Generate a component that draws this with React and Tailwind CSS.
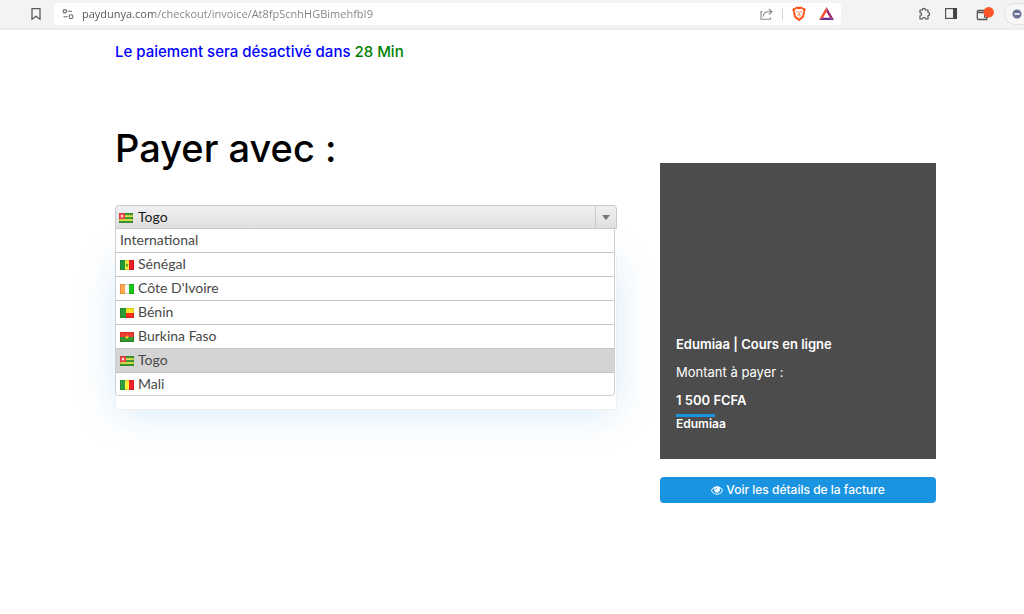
// Checkout.jsx
import React, { useState } from "react";

const countries = [
  { name: "International" },
  { name: "Sénégal", code: "sn" },
  { name: "Côte D'Ivoire", code: "ci" },
  { name: "Bénin", code: "bj" },
  { name: "Burkina Faso", code: "bf" },
  { name: "Togo", code: "tg" },
  { name: "Mali", code: "ml" },
];

function Flag({ code }) {
  return (
    <svg viewBox="0 0 14 9" preserveAspectRatio="none" className="w-[14px] h-[10px] shrink-0" aria-hidden="true">
      {code === "sn" && (
        <>
          <rect width="5" height="9" fill="#1f9a3a" />
          <rect x="5" width="4" height="9" fill="#f4ec3c" />
          <rect x="9" width="5" height="9" fill="#f01c24" />
          <path d="M7 2.8l.6 1.3h1.2l-1 .9.4 1.4L7 5.6l-1.2.8.4-1.4-1-.9h1.2z" fill="#4a9c2a" />
        </>
      )}
      {code === "ci" && (
        <>
          <rect width="5" height="9" fill="#ffa64c" />
          <rect x="5" width="4" height="9" fill="#f7f7f7" />
          <rect x="9" width="5" height="9" fill="#17c517" />
        </>
      )}
      {code === "bj" && (
        <>
          <rect width="14" height="9" fill="#fb2a1d" />
          <rect width="14" height="4.5" fill="#f5e425" />
          <rect width="6" height="9" fill="#2b9b34" />
        </>
      )}
      {code === "bf" && (
        <>
          <rect width="14" height="9" fill="#35962f" />
          <rect width="14" height="4.5" fill="#f03a35" />
          <path d="M7 2.6l.6 1.4h1.5L7.9 5l.4 1.4L7 5.6l-1.3.8L6.1 5 4.9 4h1.500z" fill="#f2cf2a" />
        </>
      )}
      {code === "tg" && (
        <>
          <rect width="14" height="9" fill="#3f9a35" />
          <rect y="2" width="14" height="1.6" fill="#dfe04a" />
          <rect y="5.5" width="14" height="1.6" fill="#dfe04a" />
          <rect width="6" height="5.5" fill="#f2474a" />
          <circle cx="3" cy="2.8" r="1.2" fill="#ffe3e3" />
        </>
      )}
      {code === "ml" && (
        <>
          <rect width="5" height="9" fill="#2ea043" />
          <rect x="5" width="4" height="9" fill="#fbf03a" />
          <rect x="9" width="5" height="9" fill="#f8202a" />
        </>
      )}
      <rect x="0.5" y="0.5" width="13" height="8" fill="none" stroke="#000" strokeOpacity="0.12" />
    </svg>
  );
}

function BrowserBar() {
  return (
    <header className="flex items-center h-[30px] pb-px bg-[#f3f3f3] border-b-2 border-[#ececec] overflow-hidden">
      <button aria-label="Bookmark" className="ml-[30px] w-3 mr-3">
        <svg viewBox="0 0 12 14" className="w-3 h-[14px]" fill="none" stroke="#5c5c5c" strokeWidth="1.3">
          <path d="M2 1.7h8v10.6L6 9.3 2 12.3z" />
        </svg>
      </button>

      <div className="flex flex-1 items-center h-[22px] bg-white rounded px-2">
        <svg viewBox="0 0 12 12" className="w-3 h-3 shrink-0" fill="none" stroke="#6a6a6a" strokeWidth="1.1">
          <circle cx="2.8" cy="3.3" r="1.7" />
          <path d="M5.8 3.300H10M1.500 8.700h4" />
          <circle cx="9" cy="8.7" r="1.9" />
        </svg>
        <input
          type="text"
          aria-label="Address"
          defaultValue="paydunya.com/checkout/invoice/At8fpScnhHGBimehfbI9"
          className="ml-2 flex-1 min-w-0 text-[11px] leading-4 outline-none text-transparent bg-clip-text bg-[linear-gradient(90deg,#505050_73px,#808080_73px)] font-['Open_Sans',sans-serif]"
        />
        <button aria-label="Share">
          <svg viewBox="0 0 13 12" className="w-[13px] h-3" fill="none" stroke="#8a8a8a" strokeWidth="1.1">
            <path d="M2.500 3.500H1v7.700h9.500V9.500" />
            <path d="M3.300 8.500c.3-3 2.300-4.700 5.200-4.700h3M9 1l3 2.800-3 2.700" />
          </svg>
        </button>
        <span className="w-px h-3 mx-[9px] bg-[#d6d6d6]" />
        <button aria-label="Shields">
          <svg viewBox="0 0 14 16" className="w-[14px] h-4">
            <path d="M4 .8h6l1.300 1.400 1.500-.1.900 2-.6 1.300-1.300 6.200L7 15.300l-4.800-3.700L.9 5.400.3 4.100l.9-2 1.500.1z" fill="#fb5418" />
            <path d="M7 3.300l3-.5 1.700 2.400-1.500 2.900.3 1.700L7 12.800 3.500 9.800l.3-1.700-1.500-2.900L4 2.800z" fill="#fff" />
            <path d="M3.800 5.200l1.900.7M10.200 5.200l-1.900.7M7 5.500v3.300M5.300 9.500L7 8.700l1.700.8M7 10.500v1" stroke="#fb5418" strokeWidth=".8" fill="none" />
          </svg>
        </button>
        <button aria-label="Rewards" className="ml-[13px] -mr-px">
          <svg viewBox="0 0 15 13" className="w-[15px] h-[13px]">
            <path d="M7.500 0L0 13l4-2.300 3.500-6z" fill="#ff4724" />
            <path d="M7.500 0L15 13l-4-2.300-3.500-6z" fill="#9e1f63" />
            <path d="M0 13h15l-4-2.300H4z" fill="#662d91" />
          </svg>
        </button>
      </div>

      <div className="flex items-center pl-[77px]">
        <button aria-label="Extensions">
          <svg viewBox="0 0 13 13" className="w-[13px] h-[13px]" fill="none" stroke="#555" strokeWidth="1.2" strokeLinejoin="round">
            <path d="M2 3h2.300a1.600 1.600 0 1 1 3.200 0H10v2.500a1.600 1.600 0 1 1 0 3.200V12H7.500a1.500 1.500 0 0 0-3 0H2V8.900a1.600 1.600 0 0 0 0-3.200z" />
          </svg>
        </button>
        <button aria-label="Sidebar" className="ml-[14px]">
          <svg viewBox="0 0 12 11" className="w-3 h-[11px]">
            <rect x=".6" y=".6" width="10.8" height="9.8" fill="none" stroke="#555" strokeWidth="1.2" />
            <rect x="8" y="0" width="4" height="11" fill="#444" />
          </svg>
        </button>
        <button aria-label="Wallet" className="ml-[19px]">
          <svg viewBox="0 0 18 14" className="w-[18px] h-[14px]">
            <path d="M10 3.500H2.500a1.200 1.200 0 0 0-1.200 1V11.300a1.200 1.200 0 0 0 1.200 1.200h8.200V5.500H2" fill="none" stroke="#555" strokeWidth="1.3" />
            <path d="M12 8.300H8.500v2H12z" fill="none" stroke="#555" strokeWidth="1.1" />
            <circle cx="12.7" cy="5.2" r="5.2" fill="#ff5429" />
          </svg>
        </button>
        <button aria-label="Profile" className="ml-[10px]">
          <svg viewBox="0 0 20 22" className="w-5 h-[22px]">
            <path d="M20 .5H11a10.500 10.500 0 0 0 0 21h9" fill="#f7f7f7" stroke="#e2e2e2" />
            <circle cx="13" cy="11" r="4.5" fill="#6b7096" />
            <path d="M10.500 11h5" stroke="#fff" strokeWidth="1.6" />
          </svg>
        </button>
      </div>
    </header>
  );
}

function CountrySelect() {
  const [selected, setSelected] = useState("Togo");
  const current = countries.find((c) => c.name === selected);

  return (
    <div className="relative font-[Lato,sans-serif] text-[14px] leading-[22px]">
      <div className="relative">
        <select
          aria-label="Pays"
          value={selected}
          onChange={(e) => setSelected(e.target.value)}
          className="block w-full h-6 pl-[22px] appearance-none rounded-t border border-[#c9c9c9] bg-linear-to-b from-[#f0f0f2] to-[#dfdfe1] text-[#1a1a1a] outline-none"
        >
          {countries.map((c) => (
            <option key={c.name}>{c.name}</option>
          ))}
        </select>
        <span className="absolute left-1 top-2 flex pointer-events-none">
          {current.code && <Flag code={current.code} />}
        </span>
        <span className="absolute right-px inset-y-px w-[21px] flex items-center justify-center border-l border-[#c9c9c9] pointer-events-none">
          <svg viewBox="0 0 8 5" className="w-2 h-[5px]">
            <path d="M0 0h8L4 5z" fill="#777" />
          </svg>
        </span>
      </div>

      {/* Open list */}
      <ul
        role="listbox"
        aria-label="Pays"
        className="absolute z-10 top-6 left-0 right-[2px] rounded-b border border-t-0 border-[#cfcfcf] bg-white text-[#484848] overflow-hidden"
      >
        {countries.map((c) => (
          <li
            key={c.name}
            role="option"
            aria-selected={c.name === selected}
            onClick={() => setSelected(c.name)}
            className={`flex items-center gap-1 h-6 px-1 pb-px border-b border-[#c4c4c4] last:h-[22px] last:border-b-0 ${
              c.name === selected ? "bg-[#d4d4d4]" : "bg-white"
            }`}
          >
            {c.code && (
              <span className="pt-[2px]">
                <Flag code={c.code} />
              </span>
            )}
            {c.name}
          </li>
        ))}
      </ul>

      {/* Payment panel under the list */}
      <div className="mt-7 h-[153px] bg-white border border-[#f0f0f0] shadow-[0_4px_36px_rgba(50,150,220,0.18)]" />
    </div>
  );
}

export default function App() {
  return (
    <div className="min-h-screen bg-white font-[Inter,sans-serif]">
      <BrowserBar />

      <main className="grid grid-cols-[1fr_276px] gap-x-[43px] pl-[115px] pr-[88px] pt-3">
        <section>
          <p className="text-[15px] leading-5 font-medium text-[#0000ff]">
            Le paiement sera désactivé dans <span className="text-[#008000]">28 Min</span>
          </p>
          <h1 className="mt-[62px] mb-[33px] text-[38px] leading-12 font-medium text-black">
            Payer avec :
          </h1>
          <CountrySelect />
        </section>

        {/* Summary */}
        <aside className="pt-[121px]">
          <div className="flex flex-col justify-end h-[296px] px-4 pb-7 bg-[#4c4c4c] text-[13px] leading-5 text-white">
            <h2 className="font-semibold">Edumiaa | Cours en ligne</h2>
            <p className="mt-2">Montant à payer :</p>
            <p className="mt-2 font-semibold">1 500 FCFA</p>
            <div className="mt-1 w-[39px] h-[3px] bg-[#1a94e0]" />
            <p className="text-[12px] leading-[14px] font-semibold">Edumiaa</p>
          </div>
          <button className="mt-[18px] w-full h-[26px] flex items-center justify-center gap-[3px] rounded bg-[#1a94e0] text-[12px] font-medium text-white">
            <svg viewBox="0 0 26 18" className="w-3 h-[9px]">
              <path d="M13 0C7 0 2.500 3.800 0 9c2.500 5.200 7 9 13 9s10.500-3.800 13-9C23.500 3.800 19 0 13 0z" fill="#fff" />
              <path d="M7.500 3.500C4.800 4.800 3 6.800 1.900 9c2.200 4.200 6.200 7.200 11.100 7.200S21.900 13.200 24.100 9c-1.100-2.200-2.900-4.200-5.600-5.500a6.500 6.500 0 1 1-11 0z" fill="#1a94e0" />
              <path d="M9.800 7.500A3.500 3.500 0 0 1 13 4" stroke="#1a94e0" strokeWidth="1.6" fill="none" />
            </svg>
            Voir les détails de la facture
          </button>
        </aside>
      </main>
    </div>
  );
}
